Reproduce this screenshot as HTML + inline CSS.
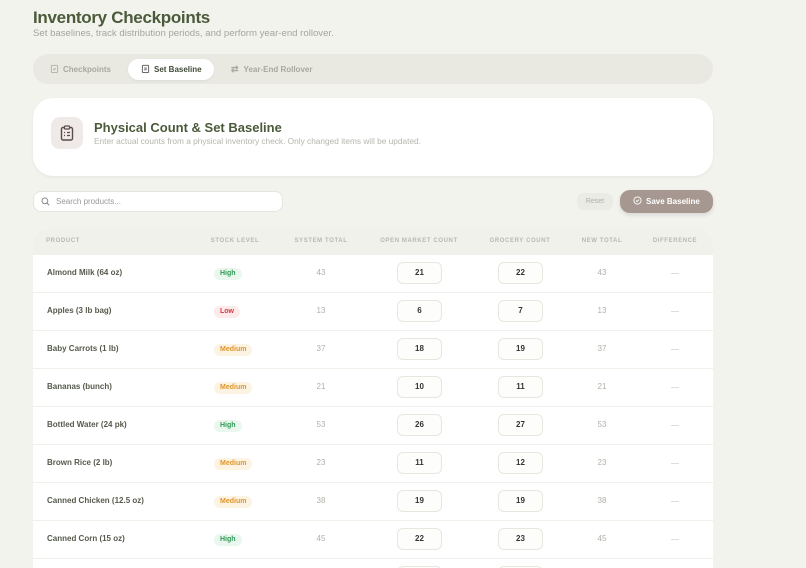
<!DOCTYPE html><html style="width:806px;height:568px;overflow:hidden"><head><style>
*{box-sizing:border-box;margin:0;padding:0}
body{width:806px;height:568px;overflow:hidden;background:#f3f3ee;font-family:"Liberation Sans",sans-serif;position:relative}
.a{position:absolute}
h1{position:absolute;left:33px;top:8px;font-size:17px;color:#4b5a3b;font-weight:700;letter-spacing:-0.3px}
.sub{left:33px;top:28px;font-size:9.6px;color:#a5a59c}
.tabs{left:33px;top:54px;width:680px;height:30px;border-radius:15px;background:#e9e9e2}
.tab{position:absolute;top:5px;height:21px;border-radius:11px;font-size:8px;font-weight:700;color:#a8a89e;line-height:21px}
.card{left:33px;top:98px;width:680px;height:78px;border-radius:20px;background:#fff;box-shadow:0 1px 3px rgba(0,0,0,.06)}
.tbl{left:33px;top:228px;width:680px;height:340px;border-radius:16px 16px 0 0;background:#fff;overflow:hidden}
.hd{position:absolute;top:0;left:0;width:680px;height:26px;background:#f1f1ec}
.th{position:absolute;top:10px;font-size:6px;letter-spacing:.6px;color:#b8b8b0;font-weight:700;transform:translateX(-50%)}
.row{position:absolute;left:0;width:680px;height:38px;border-top:1px solid #f1f1ec}
.pn{position:absolute;left:14px;top:13px;font-size:8px;font-weight:700;color:#555a4c}
.bd{position:absolute;left:181px;top:13px;height:12px;line-height:12px;padding:0 6px;border-radius:6px;font-size:7px;font-weight:700}
.High{background:#e9f7ee;color:#2f9a55}.Low{background:#fdeaea;color:#d33a3a}.Medium{background:#fdf3e2;color:#e0962b}
.n{position:absolute;top:13px;font-size:8px;color:#b0b0a8;transform:translateX(-50%)}
.in{position:absolute;top:7px;width:45px;height:22px;border:1px solid #e7e7e0;border-radius:6px;background:#fdfdfb;font-size:8px;font-weight:700;color:#333;text-align:center;line-height:20px}
.d{position:absolute;left:638px;top:18px;width:8px;height:1px;background:#ddd}
</style></head><body>
<h1>Inventory Checkpoints</h1>
<div class="a sub">Set baselines, track distribution periods, and perform year-end rollover.</div>
<div class="a tabs">
<div class="tab" style="left:17px;padding-left:0"><svg width="9" height="9" viewBox="0 0 10 10" style="vertical-align:-1px;margin-right:4px"><rect x="1.5" y="1.5" width="7" height="8" rx="1" fill="none" stroke="#b0b0a6"/><path d="M3.5 5.5l1 1 2-2" stroke="#b0b0a6" fill="none"/></svg>Checkpoints</div>
<div class="tab" style="left:95px;width:86px;background:#fff;color:#3f4a35;padding-left:13px;box-shadow:0 1px 2px rgba(0,0,0,.06)"><svg width="9" height="9" viewBox="0 0 10 10" style="vertical-align:-1px;margin-right:4px"><rect x="1.5" y="1.5" width="7" height="8" rx="1" fill="none" stroke="#555"/><path d="M3.5 4.5h3M3.5 6.5h3" stroke="#555"/></svg>Set Baseline</div>
<div class="tab" style="left:198px"><span style="margin-right:5px;font-size:9px">⇄</span>Year-End Rollover</div>
</div>
<div class="a card">
<div class="a" style="left:18px;top:19px;width:32px;height:32px;border-radius:9px;background:#efe9e8"><svg width="14" height="16" viewBox="0 0 14 16" style="position:absolute;left:9px;top:8px"><rect x="1.5" y="2.5" width="11" height="12.5" rx="1.5" fill="none" stroke="#5a4c4c" stroke-width="1.4"/><rect x="4.5" y="1" width="5" height="3" rx="0.8" fill="#efe9e8" stroke="#5a4c4c" stroke-width="1.2"/><path d="M4 7.5h1M7 7.5h3M4 10.5h1M7 10.5h3" stroke="#5a4c4c" stroke-width="1.3"/></svg></div>
<div class="a" style="left:61px;top:22px;font-size:13px;font-weight:700;color:#4b5a3b">Physical Count &amp; Set Baseline</div>
<div class="a" style="left:61px;top:38px;font-size:8.3px;color:#b5b5ad">Enter actual counts from a physical inventory check. Only changed items will be updated.</div>
</div>
<div class="a" style="left:33px;top:191px;width:250px;height:21px;border:1px solid #e5e5de;border-radius:8px;background:#fff"><svg width="9" height="9" viewBox="0 0 10 10" style="position:absolute;left:7px;top:5px"><circle cx="4.3" cy="4.3" r="3.2" fill="none" stroke="#888" stroke-width="1.1"/><path d="M6.7 6.7l2.3 2.3" stroke="#888" stroke-width="1.1"/></svg><span style="position:absolute;left:22px;top:5px;font-size:8px;color:#999">Search products...</span></div>
<div class="a" style="left:577px;top:193px;width:36px;height:17px;border-radius:7px;background:#ebebe5;font-size:7px;color:#b0b0a8;text-align:center;line-height:17px">Reset</div>
<div class="a" style="left:620px;top:190px;width:93px;height:23px;border-radius:10px;background:#a69890;color:#fff;font-size:8px;font-weight:700;line-height:23px;padding-left:13px;box-shadow:0 2px 4px rgba(0,0,0,.12)"><svg width="9" height="9" viewBox="0 0 10 10" style="vertical-align:-1px;margin-right:4px"><circle cx="5" cy="5" r="4" fill="none" stroke="#fff"/><path d="M3.3 5l1.2 1.2 2.2-2.2" stroke="#fff" fill="none"/></svg>Save Baseline</div>
<div class="a tbl">
<div class="hd">
<span class="th" style="left:30px">PRODUCT</span><span class="th" style="left:202px">STOCK LEVEL</span><span class="th" style="left:288px">SYSTEM TOTAL</span><span class="th" style="left:386px">OPEN MARKET COUNT</span><span class="th" style="left:487px">GROCERY COUNT</span><span class="th" style="left:569px">NEW TOTAL</span><span class="th" style="left:642px">DIFFERENCE</span>
</div>
<div id="rows"></div>
</div>
<script>
var d=[["Almond Milk (64 oz)","High",43,21,22],["Apples (3 lb bag)","Low",13,6,7],["Baby Carrots (1 lb)","Medium",37,18,19],["Bananas (bunch)","Medium",21,10,11],["Bottled Water (24 pk)","High",53,26,27],["Brown Rice (2 lb)","Medium",23,11,12],["Canned Chicken (12.5 oz)","Medium",38,19,19],["Canned Corn (15 oz)","High",45,22,23],["Canned Beans","High",40,20,20]];
var h="";d.forEach(function(r,i){h+='<div class="row" style="top:'+(26+i*38)+'px"><span class="pn">'+r[0]+'</span><span class="bd '+r[1]+'">'+r[1]+'</span><span class="n" style="left:288px">'+r[2]+'</span><div class="in" style="left:364px">'+r[3]+'</div><div class="in" style="left:465px">'+r[4]+'</div><span class="n" style="left:569px">'+r[2]+'</span><span class="d"></span></div>'});
document.getElementById("rows").outerHTML=h;
</script>
</body></html>
